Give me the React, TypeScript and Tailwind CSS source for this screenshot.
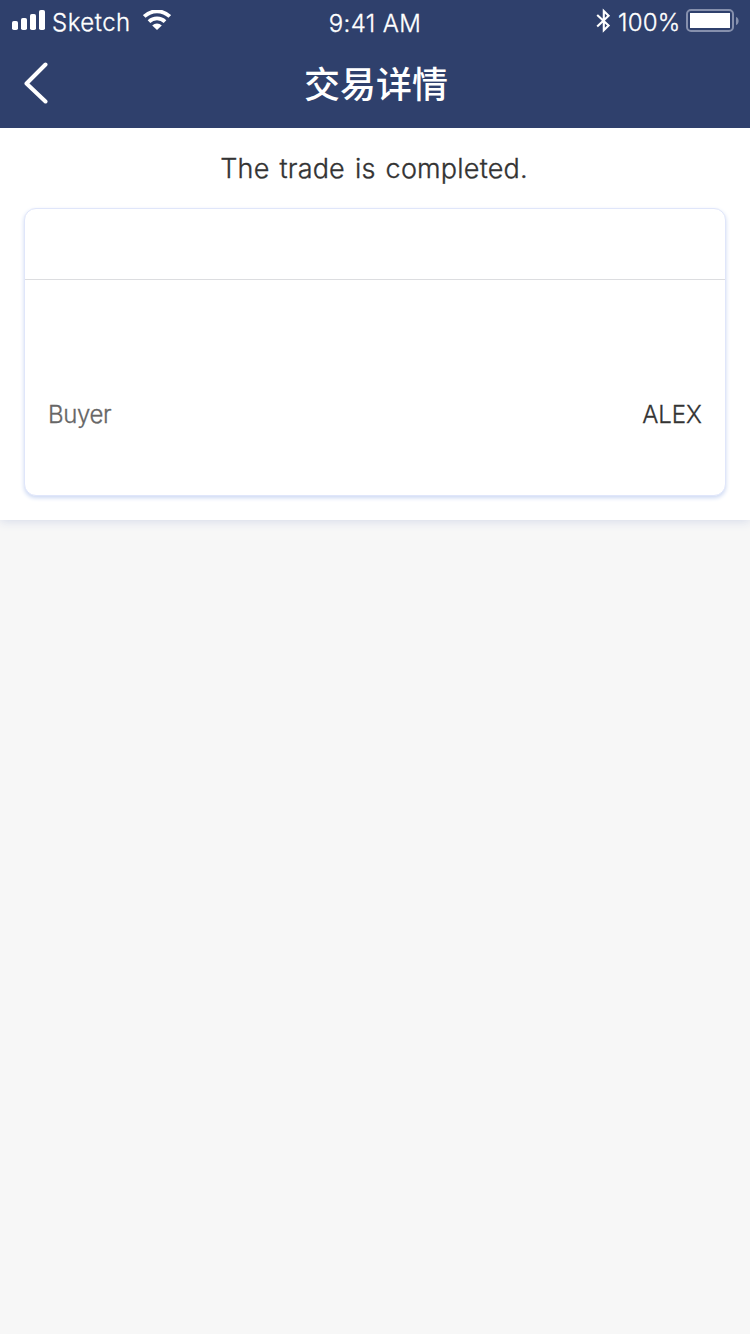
function StatusBar() {
  return (
    <div className="grid h-10 grid-cols-3 font-['Inter',sans-serif] text-2xl font-light leading-[46px] text-white [-webkit-text-stroke:0.3px]">
      <div className="flex items-start pl-3">
        <svg className="mt-2.5 shrink-0" width="34" height="20" viewBox="0 0 34 20" fill="currentColor">
          <rect x="0" y="11" width="6" height="9" rx="1.8" />
          <rect x="9" y="8" width="6" height="12" rx="1.8" />
          <rect x="18" y="4" width="6" height="16" rx="1.8" />
          <rect x="27" y="0" width="6" height="20" rx="1.8" />
        </svg>
        <span className="ml-1.5 w-[78px] whitespace-nowrap tracking-[0.5px]">Sketch</span>
        <svg className="ml-[13px] mt-2.5 shrink-0" width="28" height="20" viewBox="0 0 28 20">
          <path d="M1.2 6.5A18.3 18.3 0 0 1 26.8 6.5M6 11.6A11.5 11.5 0 0 1 22 11.6" fill="none" stroke="currentColor" strokeWidth="3.8" />
          <path d="M14 20 9.2 15.4A7 7 0 0 1 18.8 15.4Z" fill="currentColor" />
        </svg>
      </div>
      <div className="pt-px text-center tracking-[0.4px]">9:41 AM</div>
      <div className="flex items-start justify-end pr-[11px]">
        <svg className="mt-2 shrink-0" width="16" height="25" viewBox="0 0 16 25" fill="none" stroke="currentColor" strokeWidth="2.1">
          <path d="M1.2 7 12.6 17.6 7.8 22.3V3.1L12.6 7.8 1.2 18.4" />
        </svg>
        <span className="ml-1.5 w-[62px] whitespace-nowrap tracking-[0.2px]">100%</span>
        <svg className="ml-1.5 mt-[9px] shrink-0" width="53" height="23" viewBox="0 0 53 23">
          <rect x="1" y="1" width="46" height="21" rx="4" fill="none" stroke="#8690ad" strokeWidth="2" />
          <rect x="4" y="4" width="40" height="15" fill="white" />
          <path d="M50 8C53.5 9 53.5 15 50 16Z" fill="#8690ad" />
        </svg>
      </div>
    </div>
  );
}

export default function App() {
  return (
    <div className="min-h-[1334px] w-[750px] bg-[#f7f7f7]">
      <header className="relative z-10 h-32 bg-[#2f406c]">
        <StatusBar />
        <div className="grid h-[86px] grid-cols-[1fr_auto_1fr] items-center px-6 text-white">
          <svg width="24" height="42" viewBox="0 0 24 42" fill="none" stroke="currentColor" strokeWidth="4" strokeLinecap="round" strokeLinejoin="round">
            <path d="M21.5 2.5 2.5 21.5 21.5 39.5" />
          </svg>
          <h1 className="-mt-0.5 pl-0.5 font-['Noto_Sans_CJK_SC',sans-serif] text-[36px] font-medium leading-[50px]">交易详情</h1>
        </div>
      </header>
      <main className="h-[392px] bg-white px-6 pt-5 font-['Inter',sans-serif] font-light text-[#333] shadow-[0_1px_10px_#d3d9e8]">
        <p className="pr-0.5 text-center text-[27px] leading-[42px] tracking-[0.2px] [-webkit-text-stroke:0.35px] [word-spacing:2.2px]">The trade is completed.</p>
        <section className="mt-[18px] h-[288px] w-[702px] rounded-xl border border-[#e0e6fa] bg-white shadow-[0_2px_4px_#cdd9f3]">
          <div className="h-[71px] border-b border-[#dcdde0]" />
          <div className="flex h-[215px] items-start justify-between px-[23px] pt-[116px] text-2xl leading-[37px] [-webkit-text-stroke:0.3px]">
            <span className="tracking-[-0.4px] text-[#666]">Buyer</span>
            <span>ALEX</span>
          </div>
        </section>
      </main>
    </div>
  );
}
